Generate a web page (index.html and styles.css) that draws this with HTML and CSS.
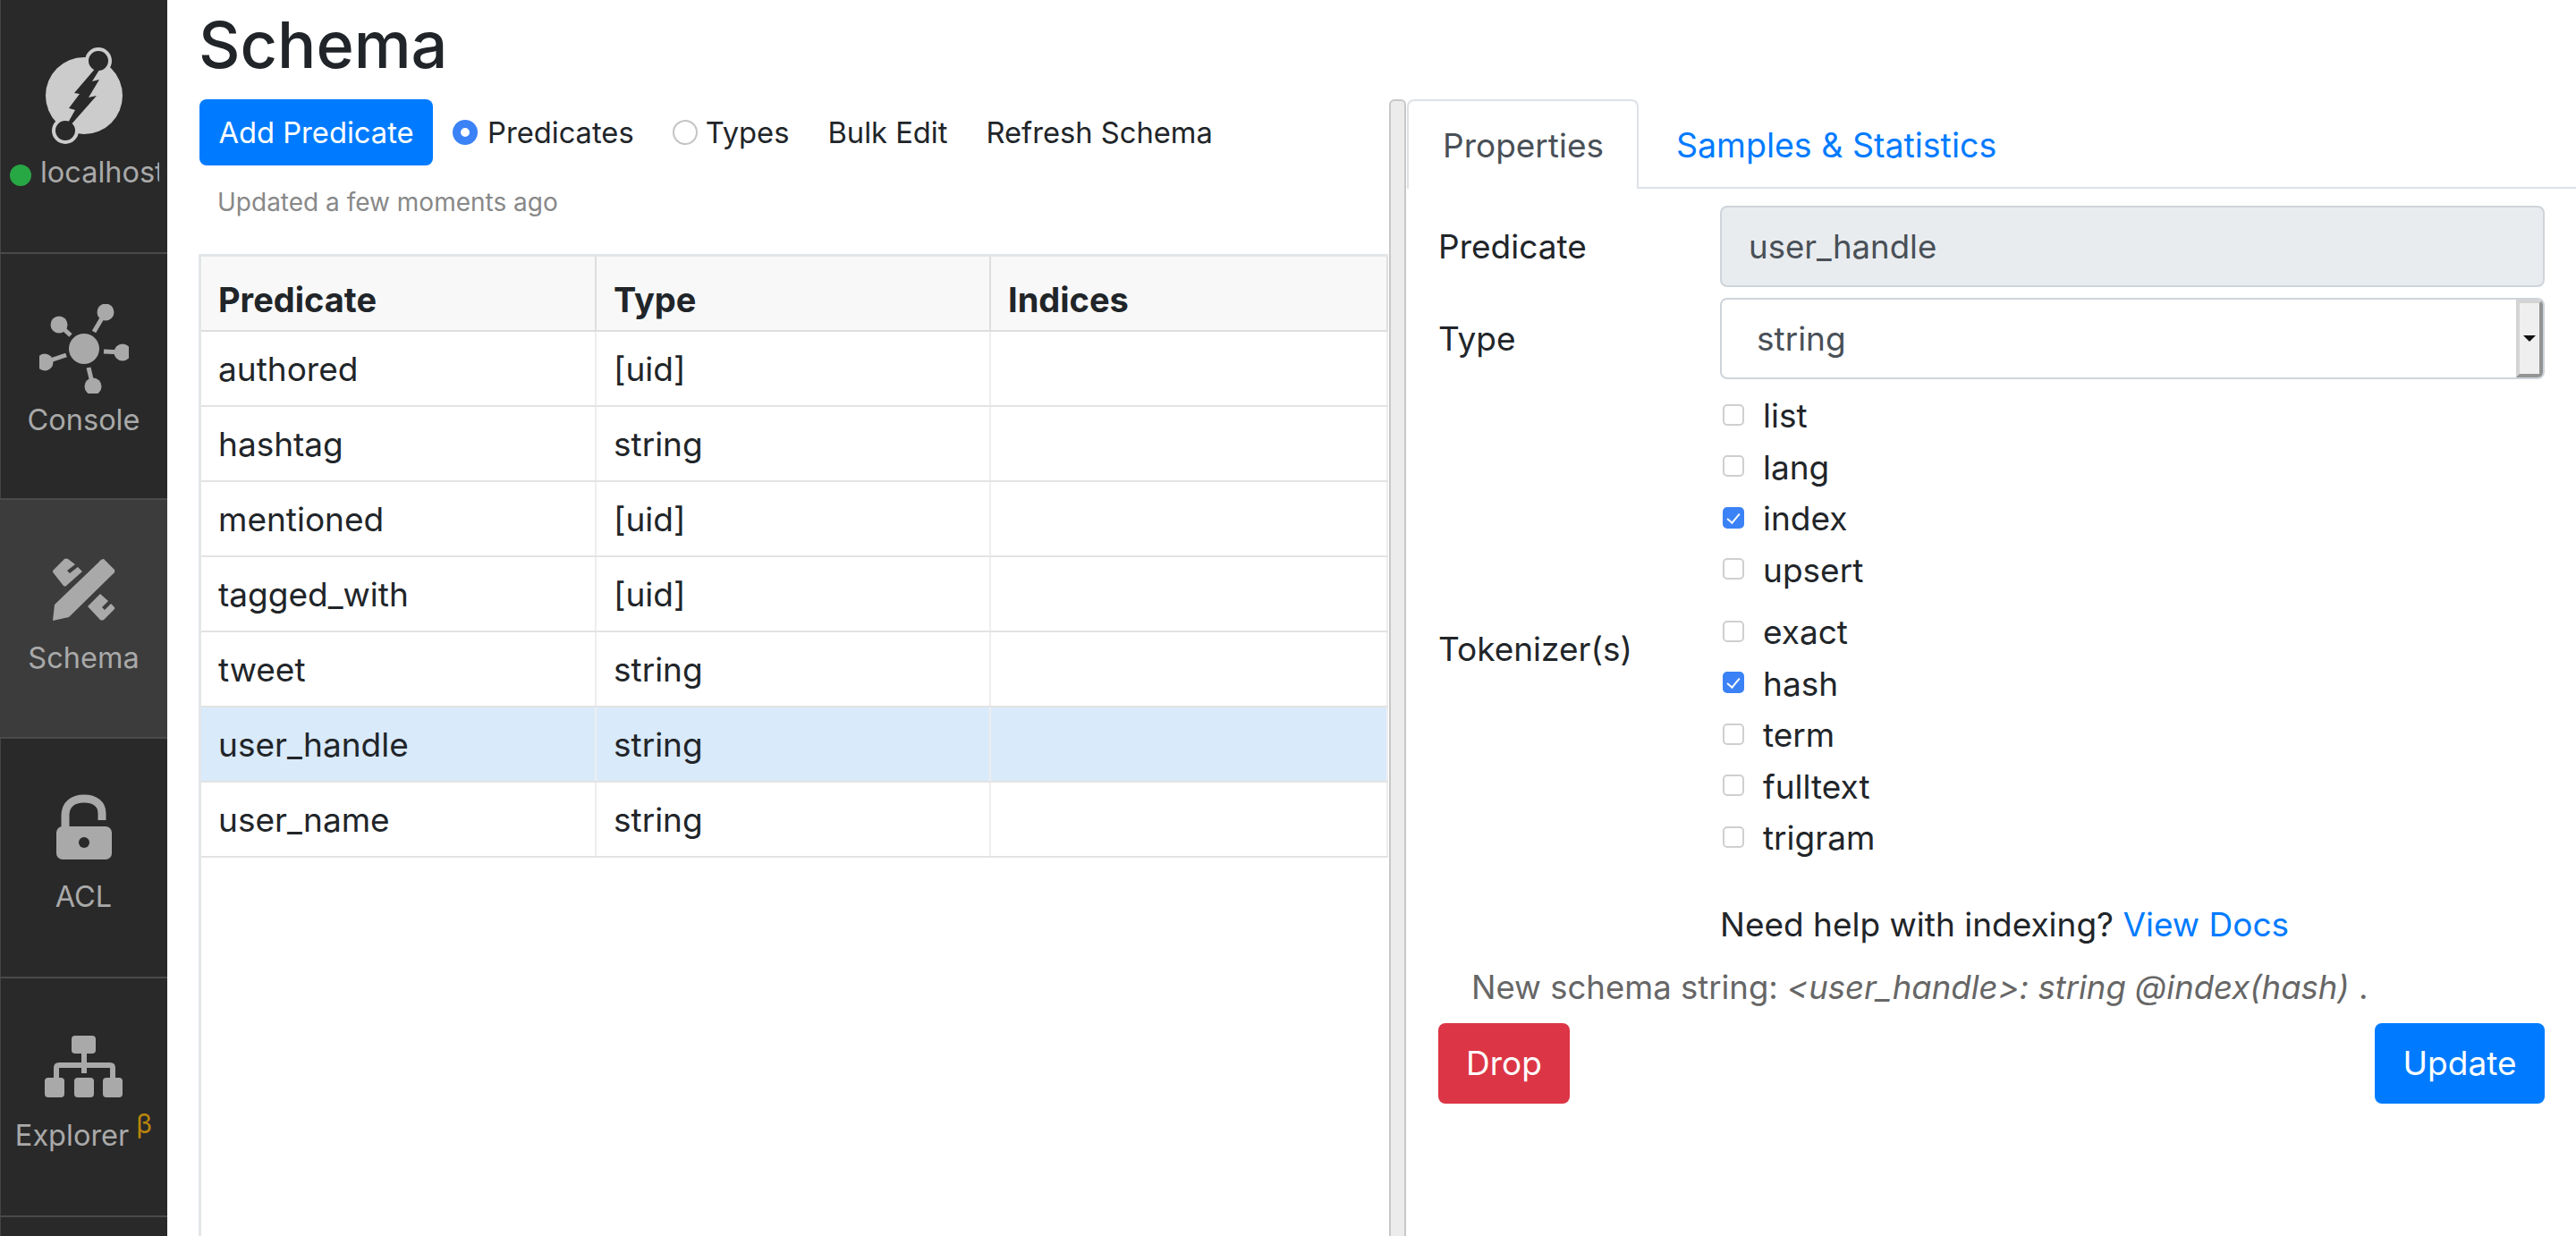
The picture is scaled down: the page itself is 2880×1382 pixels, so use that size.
FILE: index.html
```html
<!DOCTYPE html>
<html lang="en">
<head>
<meta charset="utf-8">
<title>Schema</title>
<link rel="stylesheet" href="styles.css">
</head>
<body>
<div class="app">
  <nav class="sidebar">
    <a class="nav-item nav-logo">
      <svg class="icon logo-icon" viewBox="38 52 110 110">
        <circle cx="93" cy="107" r="43" fill="#ccc"/>
        <circle cx="109" cy="68" r="13" fill="#292929" stroke="#ccc" stroke-width="4"/>
        <circle cx="72" cy="146" r="13" fill="#292929" stroke="#ccc" stroke-width="4"/>
        <polygon fill="#292929" points="106,76 82,104 88,105 76,121 83,123 74,139 77,141 107,107 98,109 110,89 102,91 112,75"/>
      </svg>
      <div class="host"><span class="dot"></span><span class="host-name">localhost</span></div>
    </a>
    <a class="nav-item nav-console">
      <svg class="icon console-icon" viewBox="44 340 100 100" fill="#a9a9a9" stroke="#a9a9a9">
        <circle cx="94" cy="390" r="17" stroke="none"/>
        <circle cx="118" cy="349" r="9.5" stroke="none"/>
        <circle cx="66" cy="363" r="9.5" stroke="none"/>
        <circle cx="50" cy="405" r="9.5" stroke="none"/>
        <circle cx="137" cy="394" r="9.5" stroke="none"/>
        <circle cx="104" cy="432" r="9.5" stroke="none"/>
        <path d="M105 371 118 349M79 375 66 363M74 397 50 405M116 393 137 394M99 411 104 432" stroke-width="5" fill="none"/>
      </svg>
      <span class="nav-label">Console</span>
    </a>
    <a class="nav-item nav-schema active">
      <svg class="icon schema-icon" viewBox="44 620 100 78" fill="#a9a9a9">
        <path d="M59 694 61 676 110 629Q113 625 116 625L128 637Q129 640 126 642L77 690Z"/>
        <path d="M60 641Q58 639 60 637L72 625Q74 624 76 625L84 631 75 638 78 641 87 634 92 639 74 655Q73 656 71 655Z"/>
        <path d="M98 678 112 664 121 672 114 679 117 682 124 675 128 679Q129 681 127 682L116 693Q114 694 112 693Z"/>
      </svg>
      <span class="nav-label">Schema</span>
    </a>
    <a class="nav-item nav-acl">
      <svg class="icon acl-icon" viewBox="44 888 100 75">
        <path d="M73 926V912C73 899 82 893 94 893 106 893 114 899 114 909V917" fill="none" stroke="#a9a9a9" stroke-width="9"/>
        <rect x="63" y="924" width="62" height="37" rx="7" fill="#a9a9a9"/>
        <circle cx="94" cy="942" r="6" fill="#292929"/>
      </svg>
      <span class="nav-label">ACL</span>
    </a>
    <a class="nav-item nav-explorer">
      <svg class="icon explorer-icon" viewBox="44 1156 100 73">
        <g fill="#a9a9a9">
          <rect x="80" y="1158" width="27" height="20" rx="4"/>
          <rect x="50" y="1205" width="22" height="22" rx="4"/>
          <rect x="83" y="1205" width="22" height="22" rx="4"/>
          <rect x="115" y="1205" width="22" height="22" rx="4"/>
        </g>
        <path d="M94 1178V1200M63 1205V1194Q63 1191 66 1191H123Q126 1191 126 1194V1205" fill="none" stroke="#a9a9a9" stroke-width="6"/>
      </svg>
      <span class="nav-label">Explorer<sup class="beta">β</sup></span>
    </a>
  </nav>

  <main class="main">
    <h1 class="title">Schema</h1>
    <div class="panes">
      <section class="left-pane">
        <div class="toolbar">
          <button class="btn btn-primary btn-add">Add Predicate</button>
          <label class="radio-label"><input class="radio" type="radio" name="view" checked>Predicates</label>
          <label class="radio-label radio-types"><input class="radio" type="radio" name="view">Types</label>
          <a class="tool-link link-bulk">Bulk Edit</a>
          <a class="tool-link link-refresh">Refresh Schema</a>
        </div>
        <div class="updated">Updated a few moments ago</div>
        <div class="grid-wrap">
          <table class="grid">
            <colgroup><col class="col-a"><col class="col-b"><col class="col-c"></colgroup>
            <thead><tr><th>Predicate</th><th>Type</th><th>Indices</th></tr></thead>
            <tbody>
              <tr><td>authored</td><td>[uid]</td><td></td></tr>
              <tr><td>hashtag</td><td>string</td><td></td></tr>
              <tr><td>mentioned</td><td>[uid]</td><td></td></tr>
              <tr><td>tagged_with</td><td>[uid]</td><td></td></tr>
              <tr><td>tweet</td><td>string</td><td></td></tr>
              <tr class="selected"><td>user_handle</td><td>string</td><td></td></tr>
              <tr><td>user_name</td><td>string</td><td></td></tr>
            </tbody>
          </table>
        </div>
      </section>
      <div class="splitter"></div>
      <section class="right-pane">
        <div class="tabs">
          <a class="tab tab-active">Properties</a>
          <a class="tab tab-link">Samples &amp; Statistics</a>
        </div>
        <form class="form">
          <div class="form-row row-input">
            <span class="form-label">Predicate</span>
            <div class="control control-disabled">user_handle</div>
          </div>
          <div class="form-row row-select">
            <span class="form-label">Type</span>
            <div class="control control-select"><span class="select-value">string</span><span class="select-arrow"><span class="caret"></span></span></div>
          </div>
          <div class="form-row row-checks">
            <span class="form-label label-tok">Tokenizer(s)</span>
            <div class="check-stack">
              <div class="check-group">
                <label class="check"><input class="box" type="checkbox">list</label>
                <label class="check"><input class="box" type="checkbox">lang</label>
                <label class="check"><input class="box" type="checkbox" checked>index</label>
                <label class="check"><input class="box" type="checkbox">upsert</label>
              </div>
              <div class="check-group">
                <label class="check"><input class="box" type="checkbox">exact</label>
                <label class="check"><input class="box" type="checkbox" checked>hash</label>
                <label class="check"><input class="box" type="checkbox">term</label>
                <label class="check"><input class="box" type="checkbox">fulltext</label>
                <label class="check"><input class="box" type="checkbox">trigram</label>
              </div>
            </div>
          </div>
          <p class="help">Need help with indexing? <a class="docs">View Docs</a></p>
          <p class="schema-string">New schema string: <em>&lt;user_handle&gt;: string @index(hash)</em> .</p>
          <div class="actions">
            <button type="button" class="btn btn-danger">Drop</button>
            <button type="button" class="btn btn-primary btn-update">Update</button>
          </div>
        </form>
      </section>
    </div>
  </main>
</div>
</body>
</html>
```
FILE: styles.css
```css
* { box-sizing: border-box; }
html, body { margin: 0; height: 100%; overflow: hidden; }
body {
  font-family: Inter, "Liberation Sans", sans-serif;
  font-size: 37px;
  color: #212529;
  background: #fff;
}
.app { display: flex; height: 1382px; overflow: hidden; }

/* sidebar */
.sidebar {
  width: 187px;
  flex: none;
  background: #292929;
  box-shadow: inset 1px 0 0 #444;
  color: #a9a9a9;
  font-size: 32.5px;
}
.nav-item {
  display: flex;
  flex-direction: column;
  align-items: center;
  border-bottom: 2px solid #4a4a4a;
  height: 267px;
}
.icon { display: block; flex: none; }
.nav-label { line-height: 40px; white-space: nowrap; }
.nav-logo { height: 284px; padding-top: 52px; }
.logo-icon { width: 110px; height: 110px; }
.host { display: flex; align-items: center; align-self: flex-start; width: 178px; height: 40px; margin-top: 11px; padding-left: 11px; overflow: hidden; }
.dot { width: 24px; height: 24px; flex: none; border-radius: 50%; background: #28a745; margin-top: 6px; margin-right: 10px; }
.host-name { line-height: 40px; }
.nav-console { height: 275px; padding-top: 56px; }
.console-icon { width: 100px; height: 100px; margin-bottom: 10px; }
.nav-schema { padding-top: 61px; background: #3c3c3c; }
.schema-icon { width: 100px; height: 78px; margin-bottom: 18px; }
.nav-acl { padding-top: 62px; height: 268px; }
.acl-icon { width: 100px; height: 75px; margin-bottom: 20px; }
.nav-explorer { padding-top: 62px; }
.explorer-icon { width: 100px; height: 73px; margin-bottom: 21px; }
.beta { color: #b8860b; font-size: 30px; margin-left: 8px; line-height: 0; vertical-align: 14px; }

/* main */
.main { flex: 1; min-width: 0; display: flex; flex-direction: column; }
.title { margin: 0 0 11px 35px; font-size: 72px; font-weight: 500; line-height: 100px; }
.panes { flex: 1; display: flex; min-height: 0; }

.left-pane { width: 1366px; flex: none; padding-left: 35px; display: flex; flex-direction: column; }
.toolbar { display: flex; align-items: center; height: 74px; margin-left: 1px; font-size: 32.7px; }
.btn { border: 0; color: #fff; font: inherit; border-radius: 8px; cursor: pointer; padding: 0; }
.btn-primary { background: #007bff; }
.btn-danger { background: #dc3545; width: 147px; height: 90px; }
.btn-add { width: 261px; height: 74px; }
.btn-update { width: 190px; height: 90px; }
.radio-label { display: flex; align-items: center; margin-left: 22px; }
.radio-types { margin-left: 43px; }
.radio {
  appearance: none; margin: 0 11px 0 0; width: 28px; height: 28px; border-radius: 50%;
  background: #fff; border: 2px solid #c4c4c4; flex: none;
}
.radio:checked { border: 9px solid #3b82f6; background: #fff; }
.radio-types .radio { margin-right: 9px; }
.tool-link { margin-left: 43px; }
.updated { color: #888; font-size: 28px; line-height: 40px; margin: 21px 0 38px 21px; }
.grid-wrap { flex: 1; border: 3px solid #e3e6e9; border-bottom: 0; border-right: 0; width: 1330px; min-height: 0; }
.grid { width: 100%; border-collapse: collapse; table-layout: fixed; }
.col-a { width: 441px; }
.col-b { width: 441px; }
.grid th, .grid td { border: 2px solid #e3e3e3; border-top: 0; border-left: 0; padding: 0 19px; text-align: left; height: 84px; }
.grid th { background: #f8f8f8; font-weight: 700; font-size: 38px; height: 83px; border-right-color: #dedede; border-bottom-color: #dedede; padding-top: 14px; }
.grid td { height: 84px; border-right-color: #eee; }
.selected td { background: #d9eafa; }

.splitter { width: 19px; flex: none; background: #ececec; border: 2px solid #c8c8c8; border-bottom: 0; border-radius: 6px 6px 0 0; }
.right-pane { flex: 1; min-width: 0; margin-left: 1px; }
.tabs { display: flex; height: 100px; border-bottom: 2px solid #dee2e6; }
.tab { display: flex; align-items: center; height: 100px; }
.tab-active { width: 259px; padding-left: 38px; color: #495057; border: 2px solid #dee2e6; border-bottom: 0; border-radius: 8px 8px 0 0; background: #fff; }
.tab-link { color: #007bff; padding-left: 42px; padding-top: 2px; font-size: 37.5px; }
.form { padding: 19px 35px 0 35px; }
.form-row { display: grid; grid-template-columns: 315px 1fr; align-items: center; }
.control { border: 2px solid #ced4da; border-radius: 8px; height: 91px; display: flex; align-items: center; }
.control-disabled { background: #e9ecef; color: #495057; padding-left: 30px; height: 91px; font-size: 36.6px; }
.row-select { margin-top: 12px; }
.control-select { color: #495057; padding-left: 39px; justify-content: space-between; overflow: hidden; }
.select-arrow { width: 30px; align-self: stretch; background: #efefef; border: 4px solid #d4d4d4; border-right-color: #949494; border-bottom-color: #949494; display: flex; align-items: center; justify-content: center; }
.caret { width: 0; height: 0; border-left: 7px solid transparent; border-right: 7px solid transparent; border-top: 7px solid #111; }
.row-checks { margin-top: 12px; }
.label-tok { margin-top: 50px; }
.check-stack { display: flex; flex-direction: column; gap: 12px; }
.check { display: flex; align-items: center; height: 57.5px; }
.box {
  appearance: none; margin: 0 21px 0 3px; width: 24px; height: 24px; border: 2px solid #cfcfcf; border-radius: 5px; background: #fff; flex: none; position: relative; top: -1px;
}
.box:checked { background: #3b82f6; border-color: #3b82f6; }
.box:checked::after { content: ""; position: absolute; left: 6px; top: 2px; width: 6px; height: 12px; border: solid #fff; border-width: 0 2px 2px 0; transform: rotate(40deg); }
.help { margin: 41px 0 0 315px; line-height: 54px; }
.docs { color: #007bff; }
.schema-string { margin: 16px 0 0 37px; line-height: 54px; color: #666; font-size: 36.5px; }
.actions { display: flex; justify-content: space-between; margin-top: 13px; }
```
